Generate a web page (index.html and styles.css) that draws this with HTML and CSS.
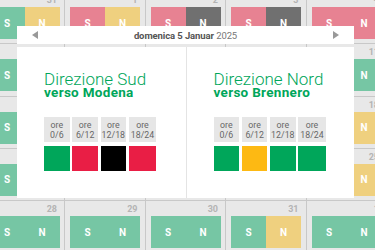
FILE: index.html
```html
<!DOCTYPE html>
<html lang="it">
<head>
  <meta charset="UTF-8">
  <title>Calendario traffico A22</title>
  <link rel="stylesheet" href="styles.css">
</head>
<body>

  <!-- calendario di sfondo (le celle coperte dalla finestra restano senza testo) -->
  <div class="calendar">
    <div class="day"><span class="num">31</span><div class="shift"><span class="green">S</span><span class="yellow">N</span></div></div>
    <div class="day"><span class="num">1</span><div class="shift"><span class="pink">S</span><span class="yellow">N</span></div></div>
    <div class="day"><span class="num">2</span><div class="shift"><span class="pink">S</span><span class="dark">N</span></div></div>
    <div class="day"><span class="num">3</span><div class="shift"><span class="pink">S</span><span class="dark">N</span></div></div>
    <div class="day"><span class="num">4</span><div class="shift"><span class="pink">S</span><span class="pink">N</span></div></div>

    <div class="day"><div class="shift"><span class="green">S</span><span class="green"></span></div></div>
    <div class="day"><div class="shift"><span class="green"></span><span class="green"></span></div></div>
    <div class="day"><div class="shift"><span class="green"></span><span class="green"></span></div></div>
    <div class="day"><div class="shift"><span class="green"></span><span class="green"></span></div></div>
    <div class="day"><span class="num">11</span><div class="shift"><span class="green"></span><span class="green">N</span></div></div>

    <div class="day"><div class="shift"><span class="green">S</span><span class="green"></span></div></div>
    <div class="day"><div class="shift"><span class="green"></span><span class="green"></span></div></div>
    <div class="day"><div class="shift"><span class="green"></span><span class="green"></span></div></div>
    <div class="day"><div class="shift"><span class="green"></span><span class="yellow"></span></div></div>
    <div class="day"><span class="num">18</span><div class="shift"><span class="green"></span><span class="yellow">N</span></div></div>

    <div class="day"><div class="shift"><span class="green">S</span><span class="green"></span></div></div>
    <div class="day"><div class="shift"><span class="green"></span><span class="green"></span></div></div>
    <div class="day"><div class="shift"><span class="green"></span><span class="green"></span></div></div>
    <div class="day"><div class="shift"><span class="green"></span><span class="yellow"></span></div></div>
    <div class="day"><span class="num">25</span><div class="shift"><span class="green"></span><span class="yellow">N</span></div></div>

    <div class="day"><span class="num">28</span><div class="shift"><span class="green">S</span><span class="green">N</span></div></div>
    <div class="day"><span class="num">29</span><div class="shift"><span class="green">S</span><span class="green">N</span></div></div>
    <div class="day"><span class="num">30</span><div class="shift"><span class="green">S</span><span class="green">N</span></div></div>
    <div class="day"><span class="num">31</span><div class="shift"><span class="green">S</span><span class="yellow">N</span></div></div>
    <div class="day"><span class="num">1</span><div class="shift"><span class="green">S</span><span class="green">N</span></div></div>
  </div>

  <!-- dettaglio del giorno -->
  <div class="dialog">
    <div class="dialog-head">
      <span class="arrow prev"></span>
      <span class="date"><b>domenica 5 Januar</b> 2025</span>
      <span class="arrow next"></span>
    </div>

    <div class="dialog-body">
      <div class="panel">
        <h2>Direzione Sud</h2>
        <h3>verso Modena</h3>
        <div class="slots">
          <div class="slot">ore<br>0/6</div>
          <div class="slot">ore<br>6/12</div>
          <div class="slot">ore<br>12/18</div>
          <div class="slot">ore<br>18/24</div>
          <div class="level ok"></div>
          <div class="level high"></div>
          <div class="level stop"></div>
          <div class="level high"></div>
        </div>
      </div>

      <div class="panel">
        <h2>Direzione Nord</h2>
        <h3>verso Brennero</h3>
        <div class="slots">
          <div class="slot">ore<br>0/6</div>
          <div class="slot">ore<br>6/12</div>
          <div class="slot">ore<br>12/18</div>
          <div class="slot">ore<br>18/24</div>
          <div class="level ok"></div>
          <div class="level warn"></div>
          <div class="level ok"></div>
          <div class="level ok"></div>
        </div>
      </div>
    </div>
  </div>

</body>
</html>
```

FILE: styles.css
```css
body {
  margin: 0;
  width: 375px;
  height: 250px;
  overflow: hidden;
  position: relative;
  font-family: Roboto, "Liberation Sans", sans-serif;
  background-color: #e4e4e4;
}

/* --- calendario --- */
.calendar {
  display: grid;
  grid-template-columns: repeat(5, 80.5px);
  grid-auto-rows: 52.3px;
  margin: -8px 0 0 -15.5px;
}

.day {
  position: relative;
  box-sizing: border-box;
  padding: 15px 0 0 5px;
  background-color: #e8e8e8;
  border-right: 1.5px solid #c8c8c8;
  border-bottom: 1.5px solid #c8c8c8;
}

.num {
  position: absolute;
  top: 3px;
  right: 7px;
  font-size: 9px;
  font-weight: bold;
  color: #b4b4b4;
}

.shift {
  display: flex;
  width: 70px;
  height: 32px;
}

.shift span {
  flex: 1;
  display: flex;
  align-items: center;
  justify-content: center;
  color: #fff;
  font-size: 10px;
  font-weight: bold;
}

.green  { background-color: #76c6a4; }
.yellow { background-color: #efd07f; }
.pink   { background-color: #e78292; }
.dark   { background-color: #707070; }

/* --- finestra giorno --- */
.dialog {
  position: absolute;
  top: 26px;
  left: 17px;
  width: 337px;
}

.dialog-head {
  height: 18px;
  padding: 0 15px;
  display: flex;
  align-items: center;
  justify-content: space-between;
  background: #fff;
}

.date {
  font-size: 9.5px;
  color: #777;
  letter-spacing: -0.1px;
}

.date b {
  color: #555;
}

.arrow {
  width: 0;
  height: 0;
  border-top: 4.5px solid transparent;
  border-bottom: 4.5px solid transparent;
}

.arrow.prev { border-right: 6px solid #999; }
.arrow.next { border-left: 6px solid #999; }

.dialog-body {
  margin-top: 3px;
  height: 151px;
  display: grid;
  grid-template-columns: 1fr 1fr;
  background: #fff;
}

.panel {
  padding: 24px 0 0 27px;
}

.panel + .panel {
  border-left: 1px solid #e4e4e4;
}

.panel h2 {
  margin: 0;
  font-size: 17px;
  line-height: 16px;
  font-weight: 300;
  color: #00a65a;
}

.panel h3 {
  margin: 0;
  font-size: 13.5px;
  line-height: 11px;
  font-weight: bold;
  letter-spacing: 0.3px;
  color: #00a65a;
}

.slots {
  margin-top: 19px;
  display: grid;
  grid-template-columns: 25.7px 25.7px 25.5px 27.7px;
  grid-template-rows: 25px 25px;
  column-gap: 2.6px;
  row-gap: 4px;
}

.slot {
  display: flex;
  align-items: center;
  justify-content: center;
  text-align: center;
  font-size: 8.8px;
  line-height: 10px;
  color: #666;
  background-color: #e6e6e6;
}

.level.ok   { background-color: #00a65a; }
.level.high { background-color: #e91e45; }
.level.stop { background-color: #000; }
.level.warn { background-color: #fdb913; }
```
